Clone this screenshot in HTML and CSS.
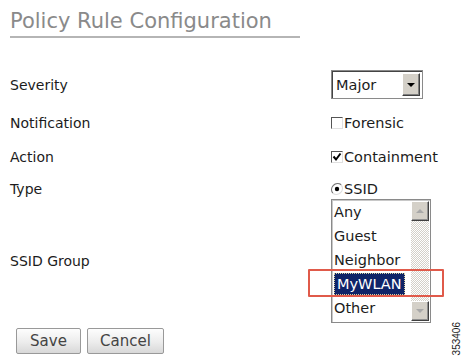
FILE: index.html
```html
<!DOCTYPE html>
<html lang="en">
<head>
  <meta charset="UTF-8" />
  <title>Policy Rule Configuration</title>
  <link rel="stylesheet" href="styles.css">
</head>
<body>
  <div class="page">
    <h1 class="title">Policy Rule Configuration</h1>

    <div class="form">
      <div class="row row-severity">
        <span class="label">Severity</span>
        <div class="select">
          <span class="select-value">Major</span>
          <span class="drop-btn"><span class="tri-down"></span></span>
        </div>
      </div>

      <div class="row row-notify">
        <span class="label">Notification</span>
        <label class="check"><span class="box"></span>Forensic</label>
      </div>

      <div class="row row-action">
        <span class="label">Action</span>
        <label class="check">
          <span class="box"><svg width="10" height="10" viewBox="0 0 10 10"><polyline points="1.5,4.5 4,7.5 8.5,1.5" fill="none" stroke="#000" stroke-width="2"/></svg></span>Containment
        </label>
      </div>

      <div class="row row-type">
        <span class="label">Type</span>
        <label class="check">
          <svg class="radio" width="12" height="12" viewBox="0 0 12 12">
            <path d="M1.8 10.2 A6 6 0 0 1 10.2 1.8" fill="none" stroke="#777" stroke-width="1.2"/>
            <path d="M10.2 1.8 A6 6 0 0 1 1.8 10.2" fill="none" stroke="#ddd" stroke-width="1.2"/>
            <circle cx="6" cy="6" r="2.2" fill="#000"/>
          </svg>SSID
        </label>
      </div>

      <div class="row row-ssid">
        <span class="label">SSID Group</span>
        <div class="listbox">
          <ul class="options">
            <li>Any</li>
            <li>Guest</li>
            <li>Neighbor</li>
            <li><span class="selected">MyWLAN</span></li>
            <li>Other</li>
          </ul>
          <div class="scrollbar">
            <span class="sb-btn"><span class="tri-up"></span></span>
            <span class="sb-track"></span>
            <span class="sb-btn"><span class="tri-down grey"></span></span>
          </div>
          <div class="callout"></div>
        </div>
      </div>
    </div>

    <div class="actions">
      <button class="btn btn-save">Save</button>
      <button class="btn btn-cancel">Cancel</button>
    </div>

    <span class="fig-id">353406</span>
  </div>
</body>
</html>
```

FILE: styles.css
```css
*,*::before,*::after{box-sizing:border-box}
body{margin:0;background:#fff;font-family:'DejaVu Sans',sans-serif;color:#1c1c1c}
.page{position:relative;width:468px;height:363px;padding:0 10px;overflow:hidden}

.title{margin:0;width:290px;padding:9px 0 2px;font-size:21px;line-height:25px;font-weight:normal;color:#8a8a8a;border-bottom:2px solid #b5b5b5}

.form{margin-top:32px;display:flex;flex-direction:column}
.row{display:flex;align-items:center}
.label{width:321px;font-size:14px}
.row-severity{height:29px}
.row-notify{height:20px;margin-top:14px}
.row-action{height:20px;margin-top:14px}
.row-type{height:20px;margin-top:12px}
.row-ssid{height:124px}

.select{display:flex;align-items:center;width:92px;height:29px;border:1px solid #8a8a8a;box-shadow:inset 1px 1px 0 #444;background:#fff;padding:0 2px 0 4px}
.select-value{flex:1;font-size:14.5px}
.drop-btn{display:flex;align-items:center;justify-content:center;width:18px;height:23px;background:#d4d0c8;border:1px solid;border-color:#fff #404040 #404040 #fff;box-shadow:inset -1px -1px 0 #808080}
.tri-down{width:0;height:0;border-left:4px solid transparent;border-right:4px solid transparent;border-top:4px solid #000}
.tri-down.grey{border-top-color:#a8a8a8}
.tri-up{width:0;height:0;border-left:4px solid transparent;border-right:4px solid transparent;border-bottom:4px solid #a8a8a8}

.check{display:flex;align-items:center;font-size:14.5px}
.box{display:flex;align-items:center;justify-content:center;width:12px;height:12px;margin-right:1px;border:1px solid;border-color:#555 #e0e0e0 #e0e0e0 #555;background:#fff}
.radio{margin-right:1px}

.listbox{position:relative;display:flex;width:100px;height:124px;border:1px solid #8a8a8a;box-shadow:inset 1px 1px 0 #c8c8c8;background:#fff}
.options{flex:1;margin:0;padding:0 0 0 2px;list-style:none;font-size:14.5px}
.options li{height:24px;line-height:24px}
.selected{display:inline-block;height:22px;line-height:20px;padding:0 2px;background:#0f2468;color:#fff;border:1px dotted #d8d0a0}
.scrollbar{display:flex;flex-direction:column;width:18px;margin:1px 1px 1px 0}
.sb-btn{display:flex;align-items:center;justify-content:center;height:20px;background:#d4d0c8;border:1px solid;border-color:#fff #404040 #404040 #fff;box-shadow:inset -1px -1px 0 #909090}
.sb-track{flex:1;background:repeating-conic-gradient(#d4d0c8 0 25%,#fff 0 50%) 0 0/2px 2px}
.callout{position:absolute;left:-24px;top:69px;width:136px;height:28px;border:2px solid #e05a4a;border-radius:1px}

.actions{display:flex;gap:6px;margin:5px 0 0 6px}
.btn{height:26px;padding:0;font-family:'DejaVu Sans',sans-serif;font-size:15px;color:#444;border:1px solid #999;border-radius:2px;background:linear-gradient(#fdfdfd,#ececec 55%,#d8d8d8)}
.btn-save{width:65px}
.btn-cancel{width:77px}

.fig-id{position:absolute;left:451px;top:322px;font-family:'Liberation Sans',sans-serif;font-size:10px;writing-mode:vertical-rl;transform:rotate(180deg)}
```
